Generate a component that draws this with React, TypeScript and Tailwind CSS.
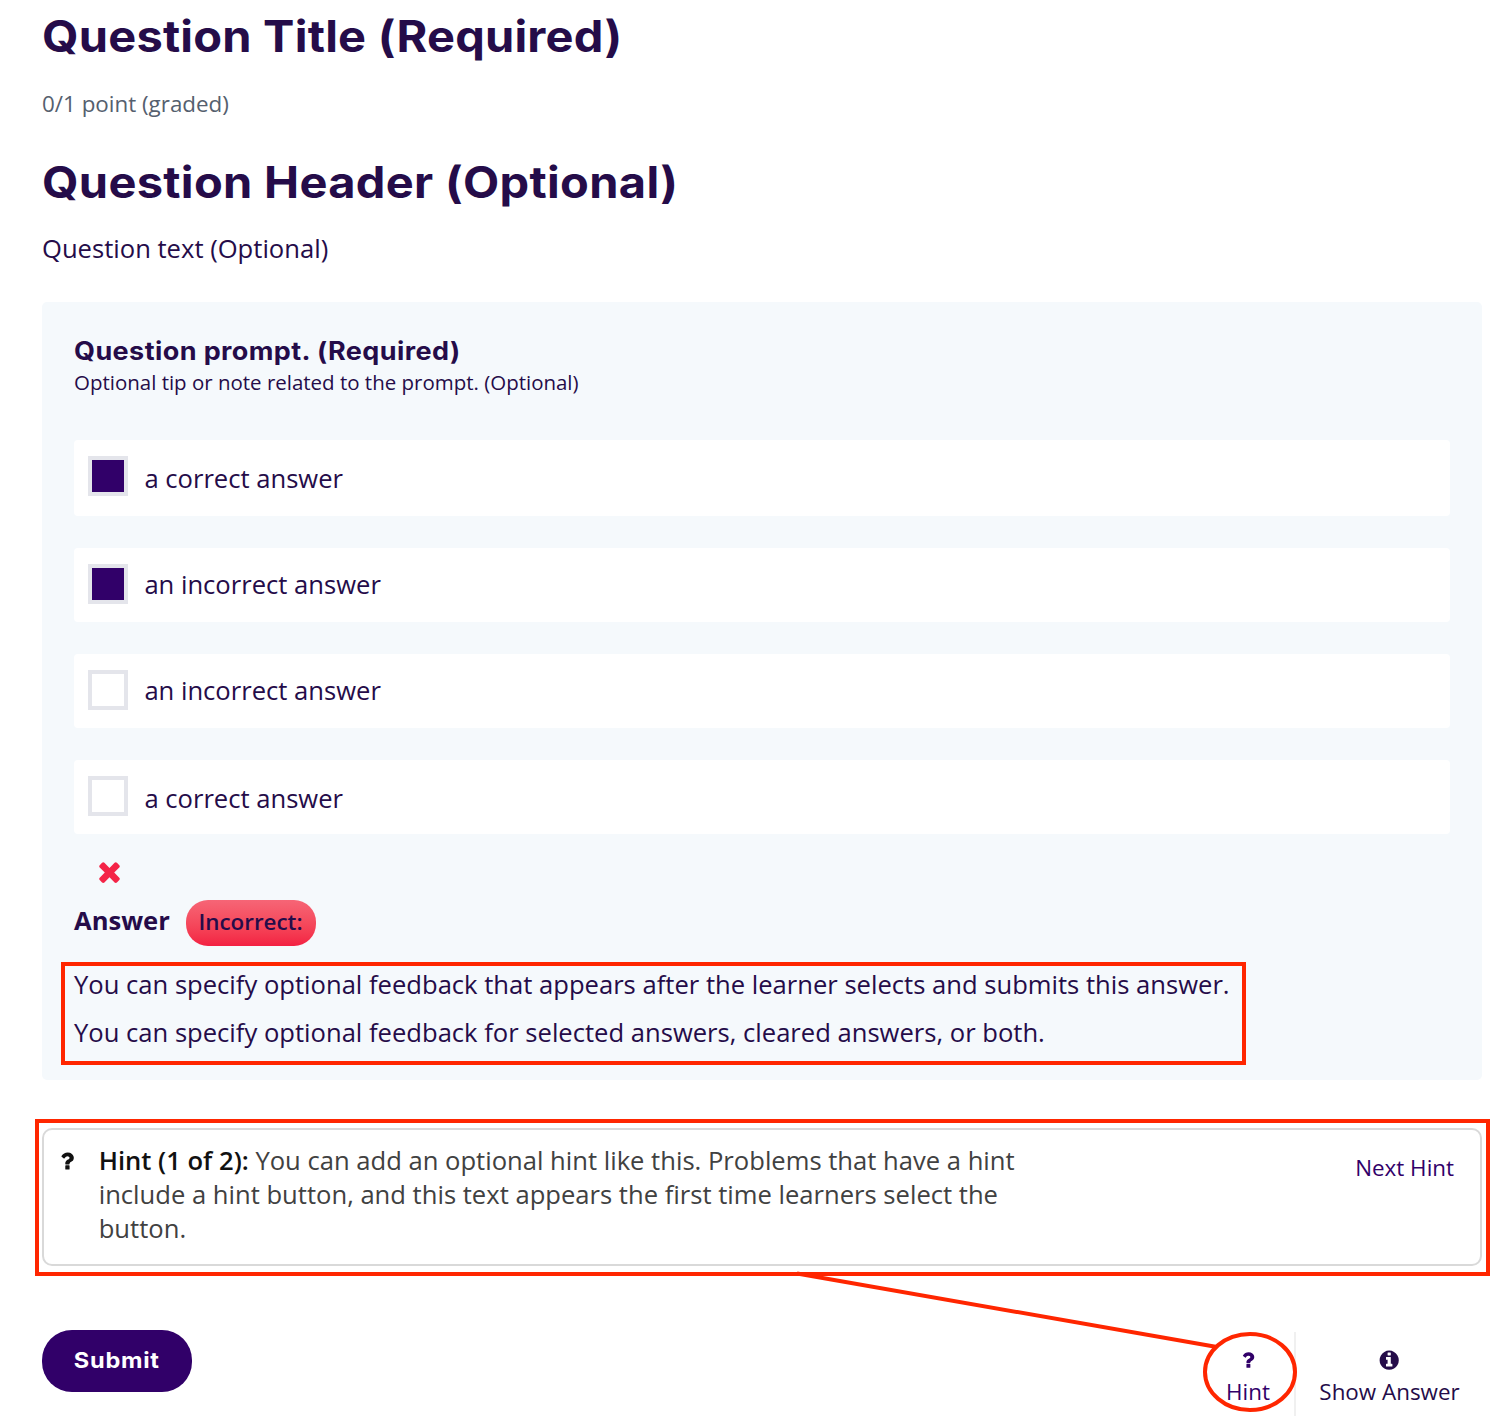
const display = 'font-["Inter","Liberation_Sans",sans-serif] font-bold';

function TimesIcon({ className }: { className: string }) {
  return (
    <svg viewBox="0 0 1792 1792" fill="currentColor" className={className} aria-hidden="true">
      <path d="M1490 1322q0 40-28 68l-136 136q-28 28-68 28t-68-28l-294-294-294 294q-28 28-68 28t-68-28l-136-136q-28-28-28-68t28-68l294-294-294-294q-28-28-28-68t28-68l136-136q28-28 68-28t68 28l294 294 294-294q28-28 68-28t68 28l136 136q28 28 28 68t-28 68l-294 294 294 294q28 28 28 68z" />
    </svg>
  );
}

function QuestionIcon({ className }: { className: string }) {
  return (
    <svg viewBox="0 0 1792 1792" fill="currentColor" className={className} aria-hidden="true">
      <path d="M1088 1256v240q0 16-12 28t-28 12h-240q-16 0-28-12t-12-28v-240q0-16 12-28t28-12h240q16 0 28 12t12 28zm316-600q0 54-15.5 101t-35 76.5-55 59.5-57.5 43.5-61 35.5q-41 23-68.5 65t-27.5 67q0 17-12 32.5t-28 15.5h-240q-15 0-25.5-18.5t-10.5-37.5v-45q0-83 65-156.5t143-108.5q59-27 84-56t25-76q0-42-46.5-74t-107.5-32q-65 0-108 29-35 25-107 115-13 16-31 16-12 0-25-8l-164-125q-13-10-15.5-25t5.5-28q160-266 464-266 80 0 161 31t146 83 106 127.5 41 158.5z" />
    </svg>
  );
}

function InfoIcon({ className }: { className: string }) {
  return (
    <svg viewBox="0 0 1792 1792" fill="currentColor" className={className} aria-hidden="true">
      <path d="M1152 1376v-160q0-14-9-23t-23-9h-96v-512q0-14-9-23t-23-9h-320q-14 0-23 9t-9 23v160q0 14 9 23t23 9h96v320h-96q-14 0-23 9t-9 23v160q0 14 9 23t23 9h448q14 0 23-9t9-23zm-128-896v-160q0-14-9-23t-23-9h-192q-14 0-23 9t-9 23v160q0 14 9 23t23 9h192q14 0 23-9t9-23zm640 416q0 209-103 385.5t-279.5 279.5-385.5 103-385.5-103-279.5-279.5-103-385.5 103-385.5 279.5-279.5 385.5-103 385.5 103 279.5 279.5 103 385.5z" />
    </svg>
  );
}

const choices = [
  { label: 'a correct answer', checked: true, row: 'h-[76px]', text: 'pt-[22px]' },
  { label: 'an incorrect answer', checked: true, row: 'h-[74px]', text: 'pt-5' },
  { label: 'an incorrect answer', checked: false, row: 'h-[74px]', text: 'pt-5' },
  { label: 'a correct answer', checked: false, row: 'h-[74px]', text: 'pt-[22px]' },
];

function Choice({ label, checked, row, text }: (typeof choices)[number]) {
  return (
    <label className={`flex items-start rounded-[4px] bg-white pl-[14px] ${row}`}>
      <span className={`mt-4 size-10 shrink-0 border-4 border-[#e4e5eb] ${checked ? 'bg-[#310069]' : 'bg-white'}`} />
      <span className={`ml-[16.4px] ${text}`}>{label}</span>
    </label>
  );
}

export default function App() {
  return (
    <main className='relative h-[1416px] w-[1502px] overflow-hidden bg-white pt-[6px] pr-5 pl-[42px] font-["Open_Sans","Liberation_Sans",sans-serif] text-[25.6px] leading-[34px] text-[#250c49]'>
      <h2 className={`${display} w-max origin-left scale-x-[1.08] text-[43.5px] leading-[60px] tracking-[0.2px]`}>
        Question Title (Required)
      </h2>
      <p className="mt-[23px] text-[22.4px] leading-[30px] text-[#55606e]">0/1 point (graded)</p>
      <h3 className={`${display} mt-[33px] w-max origin-left scale-x-[1.08] text-[43.5px] leading-[60px] tracking-[0.3px]`}>
        Question Header (Optional)
      </h3>
      <p className="mt-5">Question text (Optional)</p>

      <section className="mt-[36px] h-[778px] rounded-[5px] bg-[#f5f9fc] px-8 pt-8">
        <h4 className={`${display} w-max origin-left scale-x-[1.08] text-[25px] tracking-[0.38px]`}>
          Question prompt. (Required)
        </h4>
        <p className="text-[20.48px] leading-[28px]">Optional tip or note related to the prompt. (Optional)</p>
        <div className="mt-11 flex flex-col gap-8">
          {choices.map((choice, i) => (
            <Choice key={i} {...choice} />
          ))}
        </div>
        <TimesIcon className="mt-[21.5px] ml-5 size-[31px] text-[#f42447]" />
        <div className="mt-[13.5px] flex h-[46px] items-start">
          <strong className="mt-1 w-[112px] font-bold">Answer</strong>
          <span className="flex h-[46px] w-[130px] justify-center rounded-[22px] bg-linear-to-b from-[#f66576] to-[#f31f42] pt-[6px] pr-px text-[22.4px] leading-[31px] font-semibold">
            Incorrect:
          </span>
        </div>
        <div className="relative mt-[15px] leading-[48px] whitespace-nowrap">
          <p>You can specify optional feedback that appears after the learner selects and submits this answer.</p>
          <p>You can specify optional feedback for selected answers, cleared answers, or both.</p>
          <div className="absolute top-px -left-[13px] h-[103px] w-[1185px] border-4 border-[#ff2600]" />
        </div>
      </section>

      <section className="relative mt-12 flex h-[138px] items-start rounded-[10px] border-2 border-[#d9d9d9] text-[#414141]">
        <QuestionIcon className="mt-[19px] ml-[11.3px] size-6 text-[#111]" />
        <p className="mt-[14px] ml-[19.4px] w-[936px]">
          <strong className="font-semibold text-[#111]">Hint (1 of 2):</strong> You can add an optional hint like this. Problems that have a hint include a hint button, and this text appears the first time learners select the button.
        </p>
        <button className="mt-[22px] mr-[26px] ml-auto text-[22.4px] leading-[32px] text-[#310069]">Next Hint</button>
        <div className="absolute -top-[11px] -left-[9px] h-[157px] w-[1455px] border-4 border-[#ff2600]" />
      </section>

      <footer className="mt-[64px] flex items-start text-[22.4px] leading-[30px]">
        <button className="flex h-[62px] w-[150px] justify-center rounded-[30px] bg-[#310069] pt-[15px] text-white">
          <span className={`${display} scale-x-[1.08] text-[21.8px] tracking-[0.7px]`}>Submit</span>
        </button>
        <button className="mt-[2px] ml-auto flex h-[84px] w-[94px] flex-col items-center border-r-2 border-[#f0f0f0] pt-[17px] text-[#310069]">
          <QuestionIcon className="size-[22px]" />
          <span className="mt-[6px]">Hint</span>
        </button>
        <button className="mt-[2px] flex w-[186px] flex-col items-center pt-[17px]">
          <InfoIcon className="size-[22.4px]" />
          <span className="mt-[5.6px] ml-px">Show Answer</span>
        </button>
      </footer>

      <svg className="pointer-events-none absolute top-0 left-0" width="1502" height="1416" fill="none" stroke="#ff2600" strokeWidth="4" aria-hidden="true">
        <path d="M797 1273.5L1217 1347" />
        <ellipse cx="1250" cy="1372" rx="45" ry="38" />
      </svg>
    </main>
  );
}
